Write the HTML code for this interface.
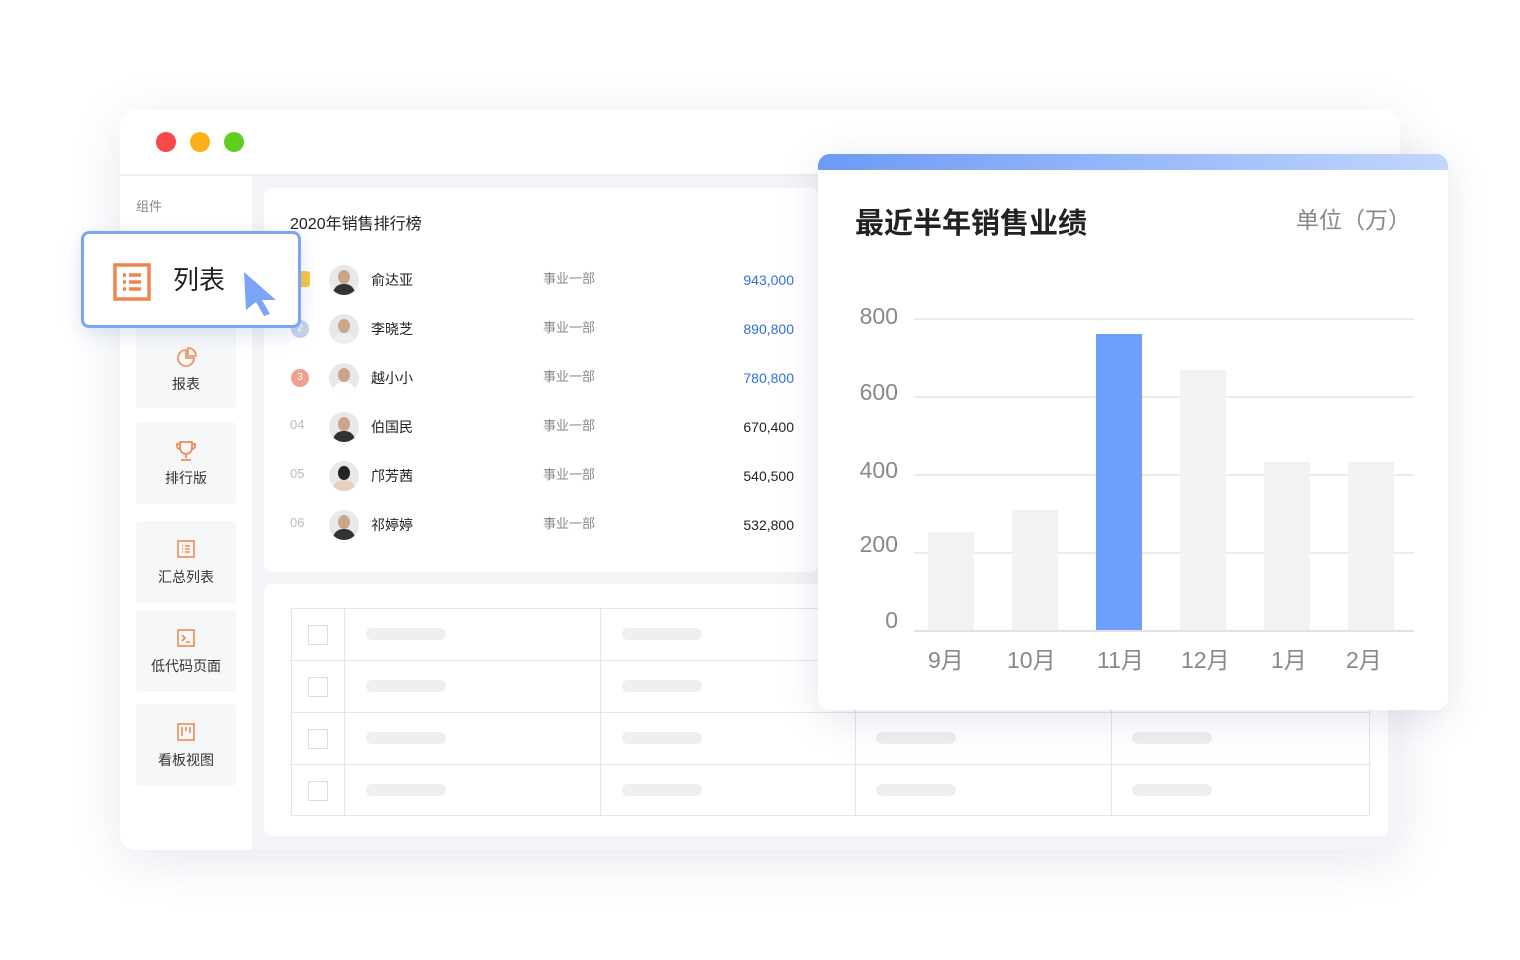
<!DOCTYPE html>
<html><head><meta charset="utf-8"><style>
*{margin:0;padding:0;box-sizing:border-box}
body{width:1520px;height:960px;background:#fff;position:relative;overflow:hidden;font-family:"Liberation Sans","Noto Sans CJK SC",sans-serif;color:#222}
.a{position:absolute;white-space:nowrap}
.win{left:120px;top:110px;width:1280px;height:740px;border-radius:16px;background:#fff;box-shadow:0 10px 50px rgba(60,80,130,.13);overflow:hidden}
.dot{width:20px;height:20px;border-radius:50%;top:22px}
.side{left:0;top:66px;width:132px;height:674px;background:#fff}
.main{left:132px;top:66px;width:1148px;height:674px;background:#f3f4f7}
.item{left:16px;width:100px;background:#f6f7f9;border-radius:4px;text-align:center;font-size:14px;color:#333}
.item svg{display:block;margin:0 auto}
.card{background:#fff;border-radius:8px}
.row{font-size:14px;line-height:18px}
.dep{left:543px;font-size:13px;color:#888;line-height:18px}
.num{left:700px;width:94px;text-align:right;font-size:14px;line-height:18px}
.av{width:30px;height:30px;border-radius:50%;background:#e8e8e8;overflow:hidden}
.av i{position:absolute;left:9px;top:5px;width:12px;height:14px;border-radius:50%;background:#caa58a}
.av b{position:absolute;left:4px;top:19px;width:22px;height:14px;border-radius:10px 10px 0 0;background:#333}
.bar{position:absolute;width:46px;background:#f2f2f2;bottom:0}
.sk{height:12px;border-radius:6px;background:#eeeff1;width:80px}
.yl{left:840px;width:58px;text-align:right;font-size:23px;color:#888;line-height:26px}
.ml{top:647px;font-size:23px;color:#888;line-height:26px}
</style></head><body>
<div class="a win">
 <div class="a dot" style="left:36px;background:#f9474a"></div>
 <div class="a dot" style="left:70px;background:#fdb018"></div>
 <div class="a dot" style="left:104px;background:#5fcf1f"></div>
 <div class="a" style="left:0;top:64px;width:1280px;height:2px;background:#eceef2"></div>
 <div class="a side">
  <div class="a" style="left:16px;top:23px;font-size:13px;color:#888;line-height:16px">组件</div>
  <div class="a item" style="top:144px;height:88px">
   <svg width="24" height="24" viewBox="0 0 24 24" style="margin-top:26px;margin-bottom:4px" fill="none" stroke="#f08a55" stroke-width="1.6"><path d="M12 4a8 8 0 1 0 8 8h-8z"/><path d="M14 2a8 8 0 0 1 8 8h-8z"/></svg>报表</div>
  <div class="a item" style="top:246px;height:82px">
   <svg width="22" height="22" viewBox="0 0 22 22" style="margin-top:18px;margin-bottom:6px" fill="none" stroke="#f08a55" stroke-width="1.8"><path d="M5 2h12v6a6 6 0 0 1-12 0z M11 14v4 M6 20h10 M5 4H2v2a3 3 0 0 0 3 3 M17 4h3v2a3 3 0 0 1-3 3"/></svg>排行版</div>
  <div class="a item" style="top:345px;height:82px">
   <svg width="20" height="20" viewBox="0 0 20 20" style="margin-top:18px;margin-bottom:8px" fill="none" stroke="#f08a55" stroke-width="1.6"><rect x="2" y="2" width="16" height="16"/><path d="M6 7h1M6 10h1M6 13h1M9 7h5M9 10h5M9 13h5"/></svg>汇总列表</div>
  <div class="a item" style="top:434px;height:82px">
   <svg width="20" height="20" viewBox="0 0 20 20" style="margin-top:18px;margin-bottom:8px" fill="none" stroke="#f08a55" stroke-width="1.6"><rect x="2" y="2" width="16" height="16"/><path d="M6 7l3 3-3 3M10 14h4"/></svg>低代码页面</div>
  <div class="a item" style="top:528px;height:82px">
   <svg width="20" height="20" viewBox="0 0 20 20" style="margin-top:18px;margin-bottom:8px" fill="none" stroke="#f08a55" stroke-width="1.6"><rect x="2" y="2" width="16" height="16"/><path d="M6 5v9M10 5v4M14 5v6"/></svg>看板视图</div>
 </div>
 <div class="a main">
  <div class="a card" style="left:12px;top:12px;width:554px;height:384px">
   <div class="a" style="left:26px;top:27px;font-size:16px;line-height:20px;color:#222">2020年销售排行榜</div>
  </div>
  <div class="a card" style="left:12px;top:408px;width:1124px;height:252px">
   <div class="a" style="left:27px;top:24px;width:1079px;height:208px;border:1px solid #e4e5e8"></div>
  </div>
 </div>
</div>
<div class="a" style="left:296px;top:271px;width:14px;height:16px;background:#fbc540;border-radius:3px"></div>
<div class="a" style="left:291px;top:320px;width:18px;height:18px;background:#c7d4e6;border-radius:50%;color:#fff;font-size:10px;text-align:center;line-height:18px">2</div>
<div class="a" style="left:291px;top:369px;width:18px;height:18px;background:#f0a08c;border-radius:50%;color:#fff;font-size:10px;text-align:center;line-height:18px">3</div>
<div class="a" style="left:290px;top:417px;font-size:13px;line-height:16px;color:#bbb">04</div>
<div class="a" style="left:290px;top:466px;font-size:13px;line-height:16px;color:#bbb">05</div>
<div class="a" style="left:290px;top:515px;font-size:13px;line-height:16px;color:#bbb">06</div>
<div class="a av" style="left:329px;top:265px"><i></i><b></b></div>
<div class="a av" style="left:329px;top:314px"><i></i><b style="background:#eee"></b></div>
<div class="a av" style="left:329px;top:363px"><i></i><b style="background:#fff"></b></div>
<div class="a av" style="left:329px;top:412px"><i></i><b></b></div>
<div class="a av" style="left:329px;top:461px"><i style="background:#222"></i><b style="background:#e6d0c0"></b></div>
<div class="a av" style="left:329px;top:510px"><i></i><b></b></div>
<div class="a row" style="left:371px;top:271px">俞达亚</div>
<div class="a row" style="left:371px;top:320px">李晓芝</div>
<div class="a row" style="left:371px;top:369px">越小小</div>
<div class="a row" style="left:371px;top:418px">伯国民</div>
<div class="a row" style="left:371px;top:467px">邝芳茜</div>
<div class="a row" style="left:371px;top:516px">祁婷婷</div>
<div class="a dep" style="top:270px">事业一部</div>
<div class="a dep" style="top:319px">事业一部</div>
<div class="a dep" style="top:368px">事业一部</div>
<div class="a dep" style="top:417px">事业一部</div>
<div class="a dep" style="top:466px">事业一部</div>
<div class="a dep" style="top:515px">事业一部</div>
<div class="a num" style="top:271px;color:#2f6fe0">943,000</div>
<div class="a num" style="top:320px;color:#2f6fe0">890,800</div>
<div class="a num" style="top:369px;color:#2f6fe0">780,800</div>
<div class="a num" style="top:418px">670,400</div>
<div class="a num" style="top:467px">540,500</div>
<div class="a num" style="top:516px">532,800</div>
<div class="a" style="left:291px;top:660px;width:1080px;height:1px;background:#e4e5e8"></div>
<div class="a" style="left:291px;top:712px;width:1080px;height:1px;background:#e4e5e8"></div>
<div class="a" style="left:291px;top:764px;width:1080px;height:1px;background:#e4e5e8"></div>
<div class="a" style="left:344px;top:608px;width:1px;height:208px;background:#e4e5e8"></div>
<div class="a" style="left:600px;top:608px;width:1px;height:208px;background:#e4e5e8"></div>
<div class="a" style="left:855px;top:608px;width:1px;height:208px;background:#e4e5e8"></div>
<div class="a" style="left:1111px;top:608px;width:1px;height:208px;background:#e4e5e8"></div>
<div class="a" style="left:308px;top:625px;width:20px;height:20px;border:1px solid #ddd;background:#fff"></div>
<div class="a" style="left:308px;top:677px;width:20px;height:20px;border:1px solid #ddd;background:#fff"></div>
<div class="a" style="left:308px;top:729px;width:20px;height:20px;border:1px solid #ddd;background:#fff"></div>
<div class="a" style="left:308px;top:781px;width:20px;height:20px;border:1px solid #ddd;background:#fff"></div>
<div class="a sk" style="left:366px;top:628px"></div><div class="a sk" style="left:622px;top:628px"></div>
<div class="a sk" style="left:366px;top:680px"></div><div class="a sk" style="left:622px;top:680px"></div>
<div class="a sk" style="left:366px;top:732px"></div><div class="a sk" style="left:622px;top:732px"></div><div class="a sk" style="left:876px;top:732px"></div><div class="a sk" style="left:1132px;top:732px"></div>
<div class="a sk" style="left:366px;top:784px"></div><div class="a sk" style="left:622px;top:784px"></div><div class="a sk" style="left:876px;top:784px"></div><div class="a sk" style="left:1132px;top:784px"></div>
<div class="a" style="left:81px;top:231px;width:220px;height:97px;border:3px solid #7da4f6;border-radius:8px;background:#fff;box-shadow:0 6px 20px rgba(90,120,200,.2)">
 <svg class="a" style="left:28px;top:28px" width="40" height="40" viewBox="0 0 40 40" fill="none" stroke="#f0844a" stroke-width="3.5"><rect x="3" y="3" width="34" height="34"/><path d="M11 13h3M11 20h3M11 27h3M17 13h12M17 20h12M17 27h12"/></svg>
 <div class="a" style="left:89px;top:30px;font-size:26px;line-height:32px;color:#222">列表</div>
 <svg class="a" style="left:156px;top:36px" width="40" height="48" viewBox="0 0 40 48"><path d="M4 2L36 30L22 30L30 44L24 46L16 32L6 40Z" fill="#7ba3f7"/></svg>
</div>
<div class="a" style="left:818px;top:154px;width:630px;height:556px;border-radius:12px;background:#fff;box-shadow:0 8px 40px rgba(60,80,130,.15);overflow:hidden">
 <div class="a" style="left:0;top:0;width:630px;height:16px;background:linear-gradient(90deg,#6d9af6,#c2d6fd)"></div>
 <div class="a" style="left:37px;top:52px;font-size:29px;line-height:36px;font-weight:bold;color:#222">最近半年销售业绩</div>
 <div class="a" style="left:478px;top:50px;font-size:23px;line-height:32px;color:#888">单位（万）</div>
</div>
<div class="a yl" style="top:303px">800</div>
<div class="a yl" style="top:379px">600</div>
<div class="a yl" style="top:457px">400</div>
<div class="a yl" style="top:531px">200</div>
<div class="a yl" style="top:607px">0</div>
<div class="a" style="left:914px;top:318px;width:500px;height:2px;background:#ececec"></div>
<div class="a" style="left:914px;top:396px;width:500px;height:2px;background:#ececec"></div>
<div class="a" style="left:914px;top:474px;width:500px;height:2px;background:#ececec"></div>
<div class="a" style="left:914px;top:552px;width:500px;height:2px;background:#ececec"></div>
<div class="a" style="left:914px;top:0;width:500px;height:630px">
 <div class="bar" style="left:14px;height:98px"></div>
 <div class="bar" style="left:98px;height:120px"></div>
 <div class="bar" style="left:182px;height:296px;background:#6f9ffc"></div>
 <div class="bar" style="left:266px;height:260px"></div>
 <div class="bar" style="left:350px;height:168px"></div>
 <div class="bar" style="left:434px;height:168px"></div>
</div>
<div class="a" style="left:914px;top:630px;width:500px;height:2px;background:#e2e2e2"></div>
<div class="a ml" style="left:928px">9月</div>
<div class="a ml" style="left:1007px">10月</div>
<div class="a ml" style="left:1097px">11月</div>
<div class="a ml" style="left:1181px">12月</div>
<div class="a ml" style="left:1271px">1月</div>
<div class="a ml" style="left:1346px">2月</div>
</body></html>
